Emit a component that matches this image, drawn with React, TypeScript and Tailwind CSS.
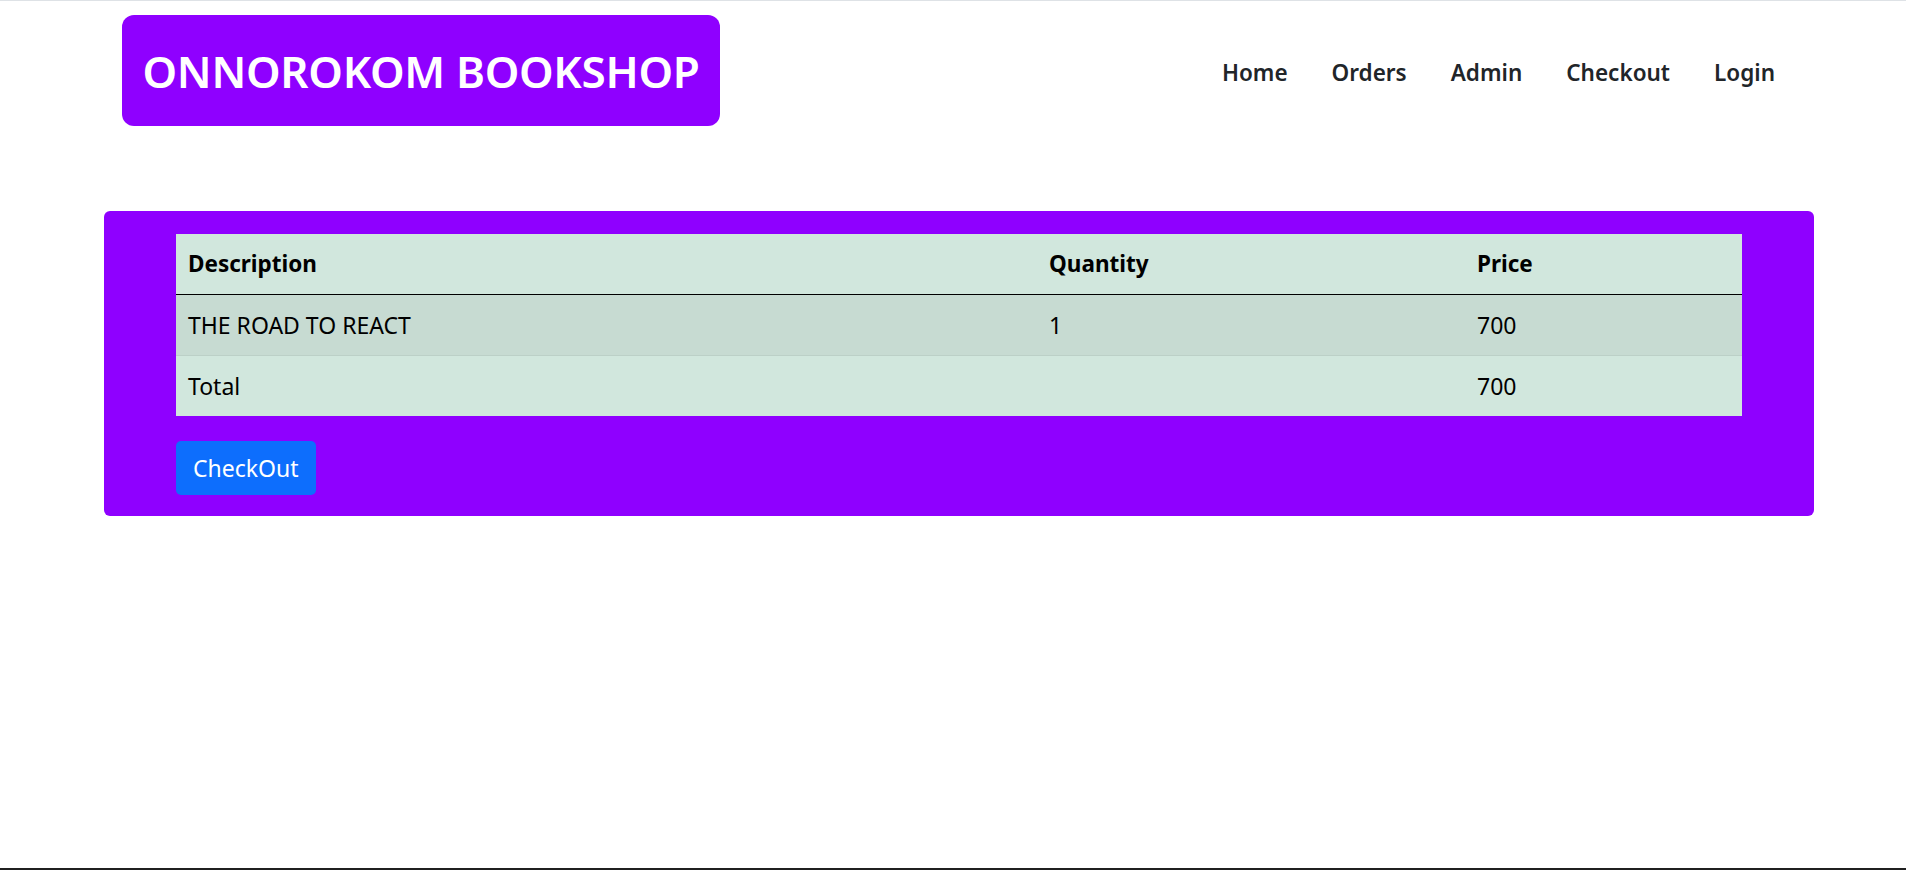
export default function App() {
  const font = { fontFamily: '"Noto Sans", "Open Sans", sans-serif' };
  return (
    <div className="min-h-[870px] flex flex-col bg-white border-t border-[#dee2e6]" style={font}>
      <header className="flex items-center justify-between pl-[122px] pr-[131px] pt-[14px]">
        <div className="bg-[#8f00ff] rounded-[12px] h-[111px] w-[598px] flex items-center justify-center">
          <h1 className="text-white text-[44px] font-semibold tracking-[-0.3px] pt-[1px]">ONNOROKOM BOOKSHOP</h1>
        </div>
        <nav className="flex items-center gap-[44px] text-[22.5px] font-semibold text-[#212529] pt-[4px]">
          <a>Home</a>
          <a>Orders</a>
          <a>Admin</a>
          <a>Checkout</a>
          <a>Login</a>
        </nav>
      </header>

      <main className="ml-[104px] mr-[92px] mt-[85px] bg-[#8f00ff] rounded-[6px] pt-[23px] pb-[21px] px-[72px]">
        <table className="w-full text-[23px] text-black border-collapse">
          <thead>
            <tr className="bg-[#d1e7dd] border-b-[1.5px] border-black">
              <th className="text-left font-bold px-[12px] h-[60px] w-[861px] text-[22.5px]">Description</th>
              <th className="text-left font-bold px-[12px] w-[428px] text-[22.5px]">Quantity</th>
              <th className="text-left font-bold px-[12px] text-[22.5px]">Price</th>
            </tr>
          </thead>
          <tbody>
            <tr className="bg-[#c7dbd2] border-b border-[#bcd0c7]">
              <td className="px-[12px] h-[61px] pt-[2px]">THE ROAD TO REACT</td>
              <td className="px-[12px] pt-[2px]">1</td>
              <td className="px-[12px] pt-[2px]">700</td>
            </tr>
            <tr className="bg-[#d1e7dd]">
              <td className="px-[12px] h-[61px]">Total</td>
              <td className="px-[12px]"></td>
              <td className="px-[12px]">700</td>
            </tr>
          </tbody>
        </table>
        <button className="mt-[25px] bg-[#0d6efd] text-white text-[23px] rounded-[5px] h-[54px] px-[17px]">
          CheckOut
        </button>
      </main>

      <div className="flex-1" />
      <div className="h-[2px] bg-[#202020]" />
    </div>
  );
}
